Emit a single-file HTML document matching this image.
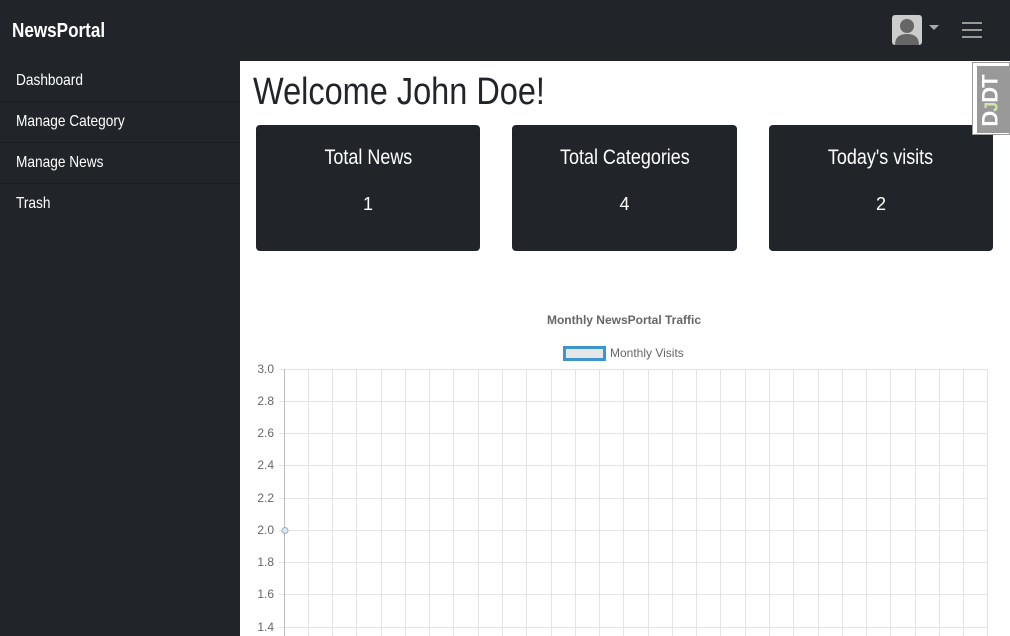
<!DOCTYPE html>
<html><head><meta charset="utf-8"><style>
*{margin:0;padding:0;box-sizing:border-box}
body{width:1010px;height:636px;overflow:hidden;background:#212529;font-family:"Liberation Sans",sans-serif;position:relative}
.c{display:inline-block;transform:scaleX(0.855);transform-origin:left center;white-space:nowrap}
.cc{display:inline-block;transform:scaleX(0.855);transform-origin:center center;white-space:nowrap}
.brand{position:absolute;left:12px;top:20px;color:#fff;font-size:20px;font-weight:bold}
.avatar{position:absolute;left:892px;top:15px;width:30px;height:30px;background:#ccc;border-radius:3px;overflow:hidden}
.caret{position:absolute;left:929px;top:25px;border-left:5px solid transparent;border-right:5px solid transparent;border-top:5px solid #aaa}
.burger{position:absolute;left:962px;top:22px;width:20px}
.burger i{display:block;height:2px;background:#999;margin-bottom:5px}
.side a{position:absolute;left:16px;color:#fff;font-size:16px;text-decoration:none}
.sep{position:absolute;left:0;width:240px;height:1px;background:#1a1d21}
.main{position:absolute;left:240px;top:61px;width:770px;height:575px;background:#fff}
h1{position:absolute;left:13px;top:10px;font-weight:normal;font-size:38px;color:#212529}
.card{position:absolute;top:64px;width:224px;height:126px;background:#212529;border-radius:4px;color:#fff;text-align:center}
.card .t{margin-top:21px;font-size:21px}
.card .n{margin-top:24px;font-size:18px}
.djdt{position:absolute;left:972px;top:62px;width:38px;height:73px;background:#fff;border:1px solid #999}
.djdt div{position:absolute;left:4px;top:3px;width:34px;height:67px;background:#999}
.djdt span{position:absolute;left:-12px;top:22px;transform:rotate(-90deg);font-family:"Liberation Sans",sans-serif;font-weight:bold;font-size:22px;color:#fff;white-space:nowrap;letter-spacing:-1px}
</style></head><body>
<div class="brand"><span class="c">NewsPortal</span></div>
<div class="avatar"><svg width="30" height="30"><circle cx="15" cy="11" r="7" fill="#666"/><path d="M3 30 Q3 19 15 19 Q27 19 27 30Z" fill="#666"/></svg></div>
<div class="caret"></div>
<div class="burger"><i></i><i></i><i></i></div>
<div class="side">
<a style="top:72px"><span class="c">Dashboard</span></a><div class="sep" style="top:101px"></div>
<a style="top:113px"><span class="c">Manage Category</span></a><div class="sep" style="top:142px"></div>
<a style="top:154px"><span class="c">Manage News</span></a><div class="sep" style="top:183px"></div>
<a style="top:195px"><span class="c">Trash</span></a>
</div>
<div class="main">
<h1><span class="c">Welcome John Doe!</span></h1>
<div class="card" style="left:16px"><div class="t"><span class="cc">Total News</span></div><div class="n">1</div></div>
<div class="card" style="left:272px;width:225px"><div class="t"><span class="cc">Total Categories</span></div><div class="n">4</div></div>
<div class="card" style="left:529px"><div class="t"><span class="cc">Today's visits</span></div><div class="n">2</div></div>
</div>
<svg style="position:absolute;left:0;top:0" width="1010" height="636" font-family="Liberation Sans,sans-serif">
<text x="624" y="324" text-anchor="middle" font-size="12" font-weight="bold" fill="#666">Monthly NewsPortal Traffic</text>
<rect x="564.5" y="347.5" width="40" height="12" fill="#e6e6e6" stroke="#3e95cd" stroke-width="3"/>
<text x="610" y="357" font-size="12" fill="#666">Monthly Visits</text>
<g stroke="#e3e3e3" stroke-width="1">
<line x1="279" y1="369.5" x2="988" y2="369.5"/><line x1="279" y1="401.5" x2="988" y2="401.5"/><line x1="279" y1="433.5" x2="988" y2="433.5"/><line x1="279" y1="465.5" x2="988" y2="465.5"/><line x1="279" y1="498.5" x2="988" y2="498.5"/><line x1="279" y1="530.5" x2="988" y2="530.5"/><line x1="279" y1="562.5" x2="988" y2="562.5"/><line x1="279" y1="594.5" x2="988" y2="594.5"/><line x1="279" y1="627.5" x2="988" y2="627.5"/>
<line x1="308.5" y1="369" x2="308.5" y2="636"/><line x1="332.5" y1="369" x2="332.5" y2="636"/><line x1="356.5" y1="369" x2="356.5" y2="636"/><line x1="381.5" y1="369" x2="381.5" y2="636"/><line x1="405.5" y1="369" x2="405.5" y2="636"/><line x1="429.5" y1="369" x2="429.5" y2="636"/><line x1="453.5" y1="369" x2="453.5" y2="636"/><line x1="478.5" y1="369" x2="478.5" y2="636"/><line x1="502.5" y1="369" x2="502.5" y2="636"/><line x1="526.5" y1="369" x2="526.5" y2="636"/><line x1="551.5" y1="369" x2="551.5" y2="636"/><line x1="575.5" y1="369" x2="575.5" y2="636"/><line x1="599.5" y1="369" x2="599.5" y2="636"/><line x1="623.5" y1="369" x2="623.5" y2="636"/><line x1="648.5" y1="369" x2="648.5" y2="636"/><line x1="672.5" y1="369" x2="672.5" y2="636"/><line x1="696.5" y1="369" x2="696.5" y2="636"/><line x1="720.5" y1="369" x2="720.5" y2="636"/><line x1="745.5" y1="369" x2="745.5" y2="636"/><line x1="769.5" y1="369" x2="769.5" y2="636"/><line x1="793.5" y1="369" x2="793.5" y2="636"/><line x1="818.5" y1="369" x2="818.5" y2="636"/><line x1="842.5" y1="369" x2="842.5" y2="636"/><line x1="866.5" y1="369" x2="866.5" y2="636"/><line x1="890.5" y1="369" x2="890.5" y2="636"/><line x1="915.5" y1="369" x2="915.5" y2="636"/><line x1="939.5" y1="369" x2="939.5" y2="636"/><line x1="963.5" y1="369" x2="963.5" y2="636"/><line x1="987.5" y1="369" x2="987.5" y2="636"/>
</g>
<line x1="284.5" y1="369" x2="284.5" y2="636" stroke="#bbb"/>
<g font-size="12" fill="#666" text-anchor="end">
<text x="274" y="373">3.0</text><text x="274" y="405">2.8</text><text x="274" y="437">2.6</text><text x="274" y="469">2.4</text><text x="274" y="502">2.2</text><text x="274" y="534">2.0</text><text x="274" y="566">1.8</text><text x="274" y="598">1.6</text><text x="274" y="631">1.4</text>
</g>
<circle cx="285" cy="530.5" r="3" fill="#dde6ee" stroke="#8fb3d0"/>
</svg>
<div class="djdt"><div><span>D<span style="position:static;color:#cfe8a8;font-size:18px;transform:none">J</span>DT</span></div></div>
</body></html>
